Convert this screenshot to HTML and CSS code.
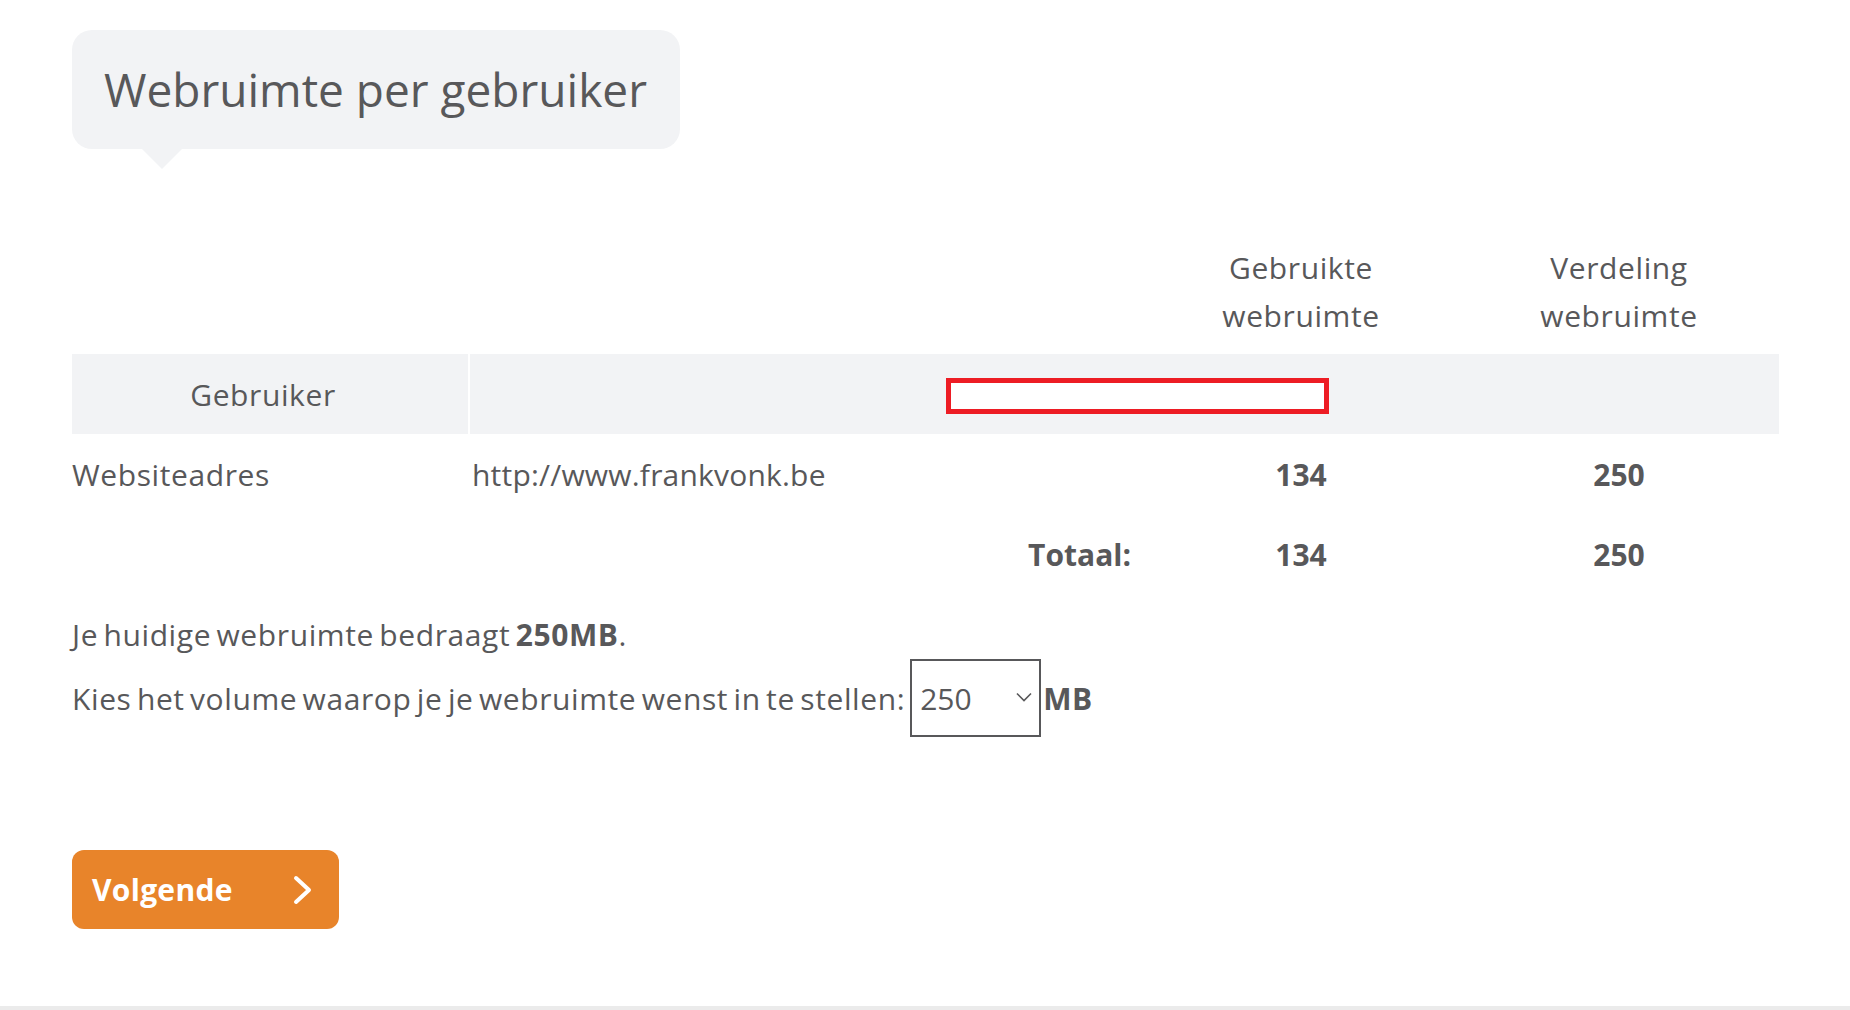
FILE: index.html
```html
<!DOCTYPE html>
<html lang="nl">
<head>
    <meta charset="UTF-8">
    <title>Webruimte per gebruiker</title>
    <link rel="stylesheet" href="styles.css">
</head>
<body>
    <div class="page">
        <div class="title-bubble">
            <h1>Webruimte per gebruiker</h1>
        </div>

        <table class="space-table">
            <colgroup>
                <col class="col-user">
                <col class="col-site">
                <col class="col-used">
                <col class="col-split">
            </colgroup>
            <thead>
                <tr class="head-labels">
                    <th></th>
                    <th></th>
                    <th>Gebruikte<br>webruimte</th>
                    <th>Verdeling<br>webruimte</th>
                </tr>
                <tr class="head-grey">
                    <th class="user-cell">Gebruiker</th>
                    <th colspan="3" class="mark-cell"><div class="mark-box"></div></th>
                </tr>
            </thead>
            <tbody>
                <tr>
                    <td>Websiteadres</td>
                    <td class="site">http://www.frankvonk.be</td>
                    <td class="num">134</td>
                    <td class="num">250</td>
                </tr>
                <tr>
                    <td></td>
                    <td class="total-label">Totaal:</td>
                    <td class="num">134</td>
                    <td class="num">250</td>
                </tr>
            </tbody>
        </table>

        <p class="current">Je huidige webruimte bedraagt <strong>250MB</strong>.</p>

        <div class="choose">
            <span>Kies het volume waarop je je webruimte wenst in te stellen:</span>
            <span class="select-wrap">
                <select class="volume">
                    <option>250</option>
                    <option>500</option>
                    <option>1000</option>
                </select>
                <svg class="select-arrow" width="16" height="10" viewBox="0 0 16 10">
                    <path d="M1 1.5 L8 8.5 L15 1.5" fill="none" stroke="#58585a" stroke-width="1.6"/>
                </svg>
            </span>
            <strong>MB</strong>
        </div>

        <button class="btn-next">
            Volgende
            <svg width="20" height="30" viewBox="0 0 20 30">
                <path d="M3 3 L16 15 L3 27" fill="none" stroke="#fff" stroke-width="4" stroke-linecap="round" stroke-linejoin="round"/>
            </svg>
        </button>
    </div>
    <div class="footer-line"></div>
</body>
</html>
```

FILE: styles.css
```css
/* Global */
body {
    margin: 0;
    font-family: 'Open Sans', 'Lato', sans-serif;
    color: #58585a;
    background: #fff;
}

.page {
    padding: 30px 71px 0 72px;
}

/* Title bubble */
.title-bubble {
    position: relative;
    display: inline-block;
    background: #f2f3f5;
    border-radius: 20px;
    padding: 0 33px 0 32px;
}

.title-bubble::after {
    content: '';
    position: absolute;
    left: 70px;
    bottom: -20px;
    border-left: 20px solid transparent;
    border-right: 20px solid transparent;
    border-top: 20px solid #f2f3f5;
}

.title-bubble h1 {
    margin: 0;
    font-size: 46px;
    font-weight: 400;
    line-height: 119px;
    letter-spacing: 0;
}

/* Table */
.space-table {
    width: 1707px;
    margin-top: 95px;
    border-collapse: collapse;
    table-layout: fixed;
    font-size: 30px;
    letter-spacing: 0.6px;
    word-spacing: -3px;
}

.col-user { width: 397px; }
.col-site { width: 674px; }
.col-used { width: 316px; }
.col-split { width: 320px; }

.space-table th {
    font-weight: 400;
    padding: 0;
}

.head-labels th {
    line-height: 48px;
    padding-bottom: 14px;
    vertical-align: bottom;
}

.head-grey th {
    height: 80px;
    background: #f2f3f5;
    vertical-align: middle;
}

.user-cell {
    border-right: 2px solid #fff;
    padding-right: 14px !important;
}

.mark-cell {
    text-align: left;
}

.mark-box {
    width: 383px;
    height: 36px;
    margin: 4px 0 0 476px;
    box-sizing: border-box;
    border: 5px solid #ed1c24;
    background: #fff;
}

.space-table td {
    height: 80px;
    padding: 0;
    vertical-align: middle;
}

.space-table td.site {
    padding-left: 3px;
    letter-spacing: 0.2px;
}

.space-table td.num {
    text-align: center;
    font-weight: 700;
    letter-spacing: 0;
}

.space-table td.total-label {
    text-align: right;
    padding-right: 12px;
    font-weight: 700;
    letter-spacing: 0;
}

/* Volume text */
.current {
    margin: 21px 0 0;
    font-size: 30px;
    line-height: 40px;
    letter-spacing: 0.6px;
    word-spacing: -3px;
}

.choose {
    display: flex;
    align-items: center;
    margin-top: 4px;
    font-size: 30px;
    letter-spacing: 0.6px;
    word-spacing: -3px;
}

.select-wrap {
    position: relative;
    margin-left: 5px;
    margin-right: 2px;
}

.volume {
    appearance: none;
    -webkit-appearance: none;
    width: 131px;
    height: 78px;
    border: 2px solid #58585a;
    border-radius: 0;
    background: #fff;
    padding: 0 0 0 8px;
    font-family: 'Open Sans', sans-serif;
    font-size: 30px;
    color: #58585a;
}

.select-arrow {
    position: absolute;
    right: 9px;
    top: 33px;
    pointer-events: none;
}

/* Button */
.btn-next {
    display: flex;
    align-items: center;
    justify-content: space-between;
    width: 267px;
    height: 79px;
    margin-top: 113px;
    padding: 0 26px 0 20px;
    border: none;
    border-radius: 12px;
    background: #e8842a;
    color: #fff;
    font-family: 'Open Sans', sans-serif;
    font-size: 30px;
    font-weight: 700;
    letter-spacing: 0.3px;
    cursor: pointer;
}

.footer-line {
    margin-top: 77px;
    height: 4px;
    background: #ebebeb;
}
```
